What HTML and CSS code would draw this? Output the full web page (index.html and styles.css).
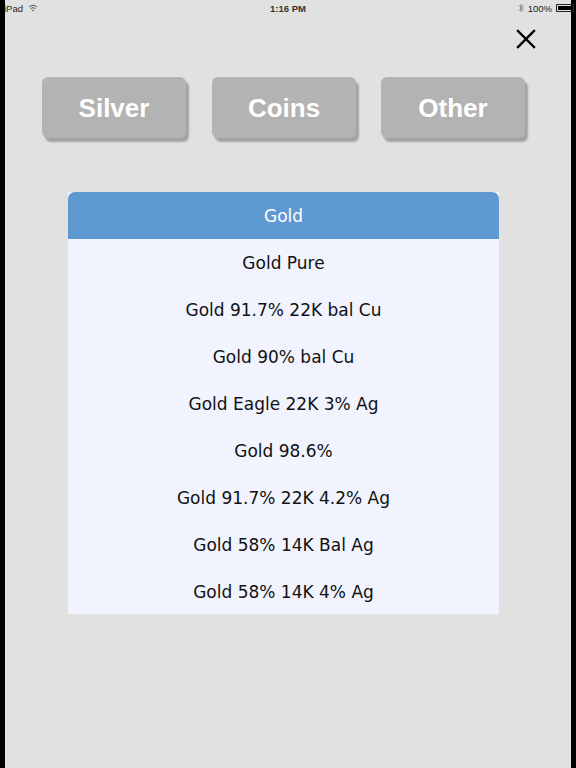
FILE: index.html
```html
<!DOCTYPE html>
<html lang="en">
<head>
    <meta charset="UTF-8">
    <meta name="viewport" content="width=device-width, initial-scale=1.0">
    <title>Alloys</title>
    <link rel="stylesheet" href="styles.css">
</head>
<body>

    <div class="screen">
        <!-- Status Bar -->
        <div class="status-bar">
            <div class="status-left">
                <span>iPad</span>
                <svg class="wifi" width="10" height="8" viewBox="0 0 10 8">
                    <path d="M1 3 Q5 -0.5 9 3" fill="none" stroke="#555" stroke-width="1"/>
                    <path d="M2.6 4.6 Q5 2.6 7.4 4.6" fill="none" stroke="#555" stroke-width="1"/>
                    <path d="M5 7.5 L3.9 6.1 Q5 5.3 6.1 6.1 Z" fill="#555"/>
                </svg>
            </div>
            <div class="status-time">1:16 PM</div>
            <div class="status-right">
                <svg width="6" height="10" viewBox="0 0 6 10">
                    <path d="M1 2.5 L5 6.5 L3 8.5 L3 1.5 L5 3.5 L1 7.5" fill="none" stroke="#777" stroke-width="0.9"/>
                </svg>
                <span>100%</span>
                <span class="battery"><span class="battery-fill"></span></span>
            </div>
        </div>

        <!-- Close -->
        <div class="top-row">
            <svg class="close" width="20" height="20" viewBox="0 0 20 20">
                <path d="M2 2 L18 18 M18 2 L2 18" stroke="#000" stroke-width="2.4" stroke-linecap="square"/>
            </svg>
        </div>

        <!-- Category Buttons -->
        <div class="categories">
            <button class="cat-button">Silver</button>
            <button class="cat-button">Coins</button>
            <button class="cat-button">Other</button>
        </div>

        <!-- Alloy List -->
        <div class="alloy-list">
            <div class="list-header">Gold</div>
            <div class="list-row">Gold Pure</div>
            <div class="list-row">Gold 91.7% 22K bal Cu</div>
            <div class="list-row">Gold 90% bal Cu</div>
            <div class="list-row">Gold Eagle 22K 3% Ag</div>
            <div class="list-row">Gold 98.6%</div>
            <div class="list-row">Gold 91.7% 22K 4.2% Ag</div>
            <div class="list-row">Gold 58% 14K Bal Ag</div>
            <div class="list-row">Gold 58% 14K 4% Ag</div>
        </div>
    </div>

</body>
</html>
```

FILE: styles.css
```css
/* General Styles */
* {
    margin: 0;
    padding: 0;
    box-sizing: border-box;
}

html, body {
    width: 576px;
    height: 768px;
    overflow: hidden;
}

body {
    background: #000;
    font-family: 'DejaVu Sans', Verdana, sans-serif;
}

.screen {
    margin-left: 5px;
    width: 566px;
    height: 768px;
    background: #e1e1e1;
    display: flex;
    flex-direction: column;
}

/* Status Bar */
.status-bar {
    height: 16px;
    display: grid;
    grid-template-columns: 1fr auto 1fr;
    align-items: center;
    font-family: 'Liberation Sans', Arial, sans-serif;
    font-size: 9.5px;
    color: #222;
}

.status-left {
    display: flex;
    align-items: center;
    gap: 5px;
    margin-left: -1px;
}

.status-time {
    font-weight: bold;
    color: #333;
}

.status-right {
    display: flex;
    align-items: center;
    justify-content: flex-end;
    gap: 4px;
    margin-right: -3px;
}

.battery {
    width: 18px;
    height: 8px;
    border: 1px solid #222;
    padding: 1px;
    display: flex;
}

.battery-fill {
    flex: 1;
    background: #000;
}

/* Close */
.top-row {
    display: flex;
    justify-content: flex-end;
    padding: 13px 35px 0 0;
    height: 34px;
}

/* Category Buttons */
.categories {
    display: flex;
    gap: 26px;
    padding: 27px 0 0 37px;
}

.cat-button {
    width: 144px;
    height: 61px;
    padding-top: 2px;
    background: #b3b3b3;
    border: none;
    border-radius: 6px;
    box-shadow: 3px 4px 2px rgba(0, 0, 0, 0.28);
    color: #fff;
    font-family: 'Liberation Sans', Arial, sans-serif;
    font-size: 26px;
    font-weight: bold;
    cursor: pointer;
}

.cat-button:nth-child(3) {
    margin-left: -1px;
}

/* Alloy List */
.alloy-list {
    margin: 54px 0 0 63px;
    width: 431px;
    background: #f1f4fe;
}

.list-header {
    height: 47px;
    padding-top: 1px;
    background: #5f99d2;
    border-radius: 7px 7px 0 0;
    color: #fff;
    font-size: 17px;
    display: flex;
    align-items: center;
    justify-content: center;
}

.list-row {
    height: 47px;
    padding-top: 1px;
    color: #111;
    font-size: 17px;
    display: flex;
    align-items: center;
    justify-content: center;
}

.list-row:last-child {
    height: 46px;
}
```
